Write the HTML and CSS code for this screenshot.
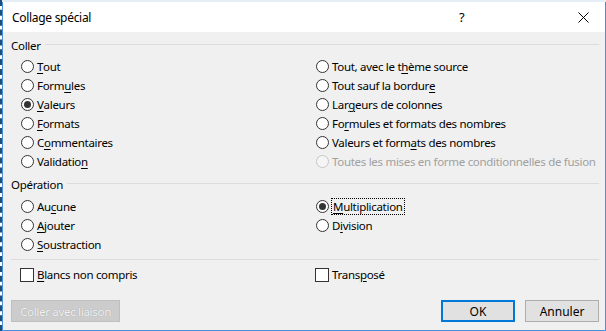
FILE: index.html
```html
<!DOCTYPE html>
<html lang="fr">
<head>
    <meta charset="UTF-8">
    <title>Collage spécial</title>
    <link rel="stylesheet" href="styles.css">
</head>
<body>
    <div class="sheet-strip"></div>
    <div class="dialog">
        <div class="titlebar">
            <span class="title">Collage spécial</span>
            <span class="help">?</span>
            <span class="close">
                <svg width="11" height="11" viewBox="0 0 11 11"><path d="M0.5 0.5 L10.5 10.5 M10.5 0.5 L0.5 10.5" stroke="#000" stroke-width="1" fill="none"/></svg>
            </span>
        </div>

        <div class="body">
            <div class="group-title"><span>Coller</span></div>
            <div class="options">
                <div class="col">
                    <div class="opt"><span class="radio"></span><u>T</u>out</div>
                    <div class="opt"><span class="radio"></span>Form<u>u</u>les</div>
                    <div class="opt"><span class="radio on"></span><u>V</u>aleurs</div>
                    <div class="opt"><span class="radio"></span><u>F</u>ormats</div>
                    <div class="opt"><span class="radio"></span>C<u>o</u>mmentaires</div>
                    <div class="opt"><span class="radio"></span>Validatio<u>n</u></div>
                </div>
                <div class="col">
                    <div class="opt"><span class="radio"></span>Tout, avec le t<u>h</u>ème source</div>
                    <div class="opt"><span class="radio"></span>Tout sauf la bordur<u>e</u></div>
                    <div class="opt"><span class="radio"></span>Lar<u>g</u>eurs de colonnes</div>
                    <div class="opt"><span class="radio"></span>Fo<u>r</u>mules et formats des nombres</div>
                    <div class="opt"><span class="radio"></span>Valeurs et form<u>a</u>ts des nombres</div>
                    <div class="opt disabled"><span class="radio"></span>Toutes les mises en forme conditionnelles de fusion</div>
                </div>
            </div>

            <div class="group-title second"><span>Opération</span></div>
            <div class="options operation">
                <div class="col">
                    <div class="opt"><span class="radio"></span>Au<u>c</u>une</div>
                    <div class="opt"><span class="radio"></span><u>A</u>jouter</div>
                    <div class="opt"><span class="radio"></span><u>S</u>oustraction</div>
                </div>
                <div class="col">
                    <div class="opt"><span class="radio on"></span><span class="focus"><u>M</u>ultiplication</span></div>
                    <div class="opt"><span class="radio"></span>D<u>i</u>vision</div>
                </div>
            </div>

            <div class="separator"></div>

            <div class="options checks">
                <div class="col">
                    <div class="opt"><span class="check"></span><u>B</u>lancs non compris</div>
                </div>
                <div class="col">
                    <div class="opt"><span class="check"></span>Trans<u>p</u>osé</div>
                </div>
            </div>

            <div class="buttons">
                <button class="btn disabled">Coller avec liaison</button>
                <div class="spacer"></div>
                <button class="btn default">OK</button>
                <button class="btn">Annuler</button>
            </div>
        </div>
    </div>
</body>
</html>
```

FILE: styles.css
```css
html, body {
    margin: 0;
    padding: 0;
}
body {
    width: 606px;
    height: 331px;
    overflow: hidden;
    background-color: #fff;
    font-family: "Noto Sans", "Open Sans", sans-serif;
    font-size: 11.5px;
    letter-spacing: -0.3px;
    color: #000;
    border-left: 2px dashed #1f4e79;
    box-sizing: border-box;
}
.sheet-strip {
    height: 2px;
    background-color: #e6eef6;
}
.dialog {
    width: 602px;
    height: 328px;
    border: 1px solid #4a90d9;
    border-top: none;
    display: flex;
    flex-direction: column;
    background-color: #f0f0f0;
}
.titlebar {
    height: 30px;
    background-color: #fff;
    display: flex;
    align-items: center;
    padding-left: 9px;
}
.title {
    flex: 1;
    font-size: 12px;
}
.help {
    width: 20px;
    font-size: 13px;
    margin-right: 99px;
}
.close {
    width: 11px;
    height: 11px;
    margin-right: 16px;
    display: flex;
}
.body {
    flex: 1;
    padding: 5px 6px 0 8px;
}
.group-title {
    display: flex;
    align-items: center;
    height: 16px;
}
.group-title::after {
    content: "";
    flex: 1;
    height: 1px;
    background-color: #dcdcdc;
    margin-left: 4px;
    margin-top: -1px;
}
.group-title.second {
    margin-top: 5px;
}
.options {
    display: grid;
    grid-template-columns: 295px 1fr;
    padding-left: 9px;
    margin-top: 4px;
}
.options.operation {
    margin-top: 5px;
}
.opt {
    height: 19px;
    display: flex;
    align-items: center;
    white-space: nowrap;
}
.opt u {
    text-decoration-thickness: 1px;
    text-underline-offset: 2px;
}
.radio {
    width: 11px;
    height: 11px;
    border: 1px solid #333;
    border-radius: 50%;
    background-color: #fff;
    margin-right: 3px;
    margin-left: 1px;
    position: relative;
    flex: none;
}
.radio.on::after {
    content: "";
    position: absolute;
    left: 2px;
    top: 2px;
    width: 7px;
    height: 7px;
    border-radius: 50%;
    background-color: #333;
}
.opt.disabled {
    color: #a0a0a0;
}
.opt.disabled .radio {
    border-color: #c6c6c6;
    background-color: #f5f5f5;
}
.focus {
    outline: 1px dotted #000;
    outline-offset: 0;
    padding: 0 1px;
}
.separator {
    height: 1px;
    background-color: #dcdcdc;
    margin: 5px 0 0 0;
}
.checks {
    margin-top: 5px;
}
.check {
    width: 12px;
    height: 12px;
    border: 1px solid #333;
    background-color: #fff;
    margin-right: 3px;
    flex: none;
}
.buttons {
    display: flex;
    margin-top: 16px;
    padding-left: 0;
}
.spacer {
    flex: 1;
}
.btn {
    font-family: inherit;
    font-size: 12px;
    height: 22px;
    width: 74px;
    margin-left: 10px;
    padding: 0;
    background-color: #e1e1e1;
    border: 1px solid #adadad;
    color: #000;
}
.btn.default {
    border: 2px solid #0078d7;
}
.btn.disabled {
    width: 109px;
    margin-left: 0;
    font-size: 11.5px;
    letter-spacing: -0.3px;
    background-color: #cccccc;
    border-color: #bfbfbf;
    color: #f2f2f2;
    text-shadow: 0 0 1px #9a9a9a;
}
```
